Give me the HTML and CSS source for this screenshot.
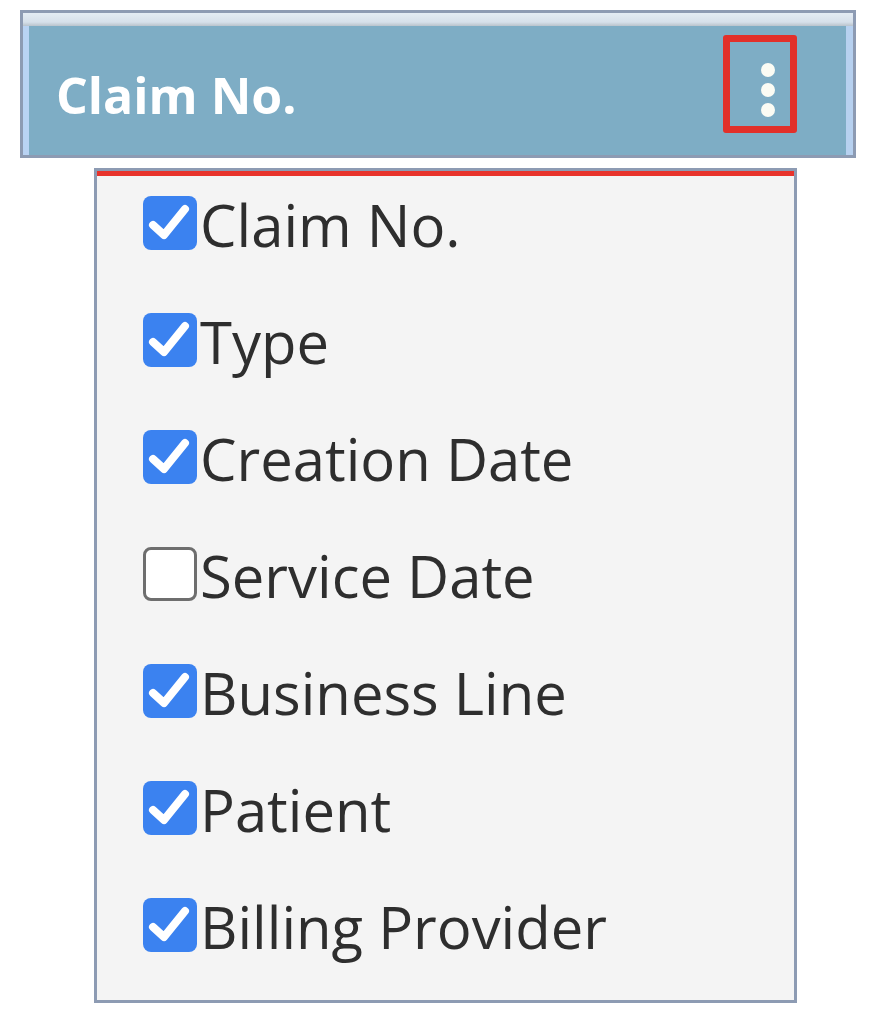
FILE: index.html
```html
<!DOCTYPE html>
<html lang="en">
<head>
<meta charset="utf-8">
<title>Claim No. column menu</title>
<link rel="stylesheet" href="styles.css">
</head>
<body>
<div class="header">
  <div class="header-top"></div>
  <div class="header-body">
    <span class="title">Claim No.</span>
    <button class="menu-btn" aria-label="Column menu">
      <span class="dot"></span><span class="dot"></span><span class="dot"></span>
    </button>
  </div>
</div>
<div class="dropdown">
  <div class="accent"></div>
  <ul class="list">
    <li class="row"><span class="box checked"><svg viewBox="0 0 54 54"><path d="M10 29 L21 39 L42 13"/></svg></span><span class="label">Claim No.</span></li>
    <li class="row"><span class="box checked"><svg viewBox="0 0 54 54"><path d="M10 29 L21 39 L42 13"/></svg></span><span class="label">Type</span></li>
    <li class="row"><span class="box checked"><svg viewBox="0 0 54 54"><path d="M10 29 L21 39 L42 13"/></svg></span><span class="label">Creation Date</span></li>
    <li class="row"><span class="box"></span><span class="label">Service Date</span></li>
    <li class="row"><span class="box checked"><svg viewBox="0 0 54 54"><path d="M10 29 L21 39 L42 13"/></svg></span><span class="label">Business Line</span></li>
    <li class="row"><span class="box checked"><svg viewBox="0 0 54 54"><path d="M10 29 L21 39 L42 13"/></svg></span><span class="label">Patient</span></li>
    <li class="row"><span class="box checked"><svg viewBox="0 0 54 54"><path d="M10 29 L21 39 L42 13"/></svg></span><span class="label">Billing Provider</span></li>
  </ul>
</div>
</body>
</html>
```
FILE: styles.css
```css
* { box-sizing: border-box; }
html, body { margin: 0; padding: 0; background: #ffffff; }
body {
  font-family: "Open Sans", "DejaVu Sans", sans-serif;
  padding-top: 10px;
}
.header {
  margin-left: 20px;
  width: 836px;
  height: 148px;
  border: 3px solid #8d9bb3;
  display: flex;
  flex-direction: column;
  background: #7eadc5;
}
.header-top {
  height: 13px;
  background: linear-gradient(#e4ecf4, #d6e0ea 70%, #b9c3cc);
  flex: none;
}
.header-body {
  flex: 1;
  display: flex;
  align-items: flex-start;
  justify-content: space-between;
  border-left: 6px solid #b9d3f3;
  border-right: 7px solid #b7d1f0;
  padding-left: 27px;
  padding-right: 49px;
}
.title {
  margin-top: 35px;
  font-weight: 700;
  font-size: 50px;
  line-height: 68px;
  color: #ffffff;
}
.menu-btn {
  margin-top: 9px;
  width: 74px;
  height: 98px;
  border: 7px solid #e2302a;
  border-radius: 3px;
  background: transparent;
  padding: 12px 0 0 16px;
  display: flex;
  flex-direction: column;
  align-items: center;
  justify-content: center;
  gap: 6px;
}
.dot {
  width: 14px;
  height: 14px;
  border-radius: 50%;
  background: #fbfcf4;
}
.dropdown {
  margin-top: 10px;
  margin-left: 94px;
  width: 703px;
  border: 3px solid #8d9bb3;
  background: #f4f4f4;
}
.accent {
  height: 5px;
  background: #e8332b;
}
.list {
  list-style: none;
  margin: 0;
  padding: 20px 0 48px 46px;
  display: flex;
  flex-direction: column;
  gap: 63px;
}
.row {
  height: 54px;
  display: flex;
  align-items: center;
  gap: 3px;
}
.box {
  flex: none;
  width: 54px;
  height: 54px;
  border-radius: 8px;
  border: 3px solid #6e6e6e;
  background: #ffffff;
}
.box.checked {
  border: none;
  background: #3b82f0;
}
.box svg {
  display: block;
  width: 54px;
  height: 54px;
  fill: none;
  stroke: #ffffff;
  stroke-width: 8;
  stroke-linecap: round;
  stroke-linejoin: round;
}
.label {
  font-size: 58px;
  line-height: 76px;
  color: #2e2e2e;
  margin-top: 3px;
  white-space: nowrap;
}
```
